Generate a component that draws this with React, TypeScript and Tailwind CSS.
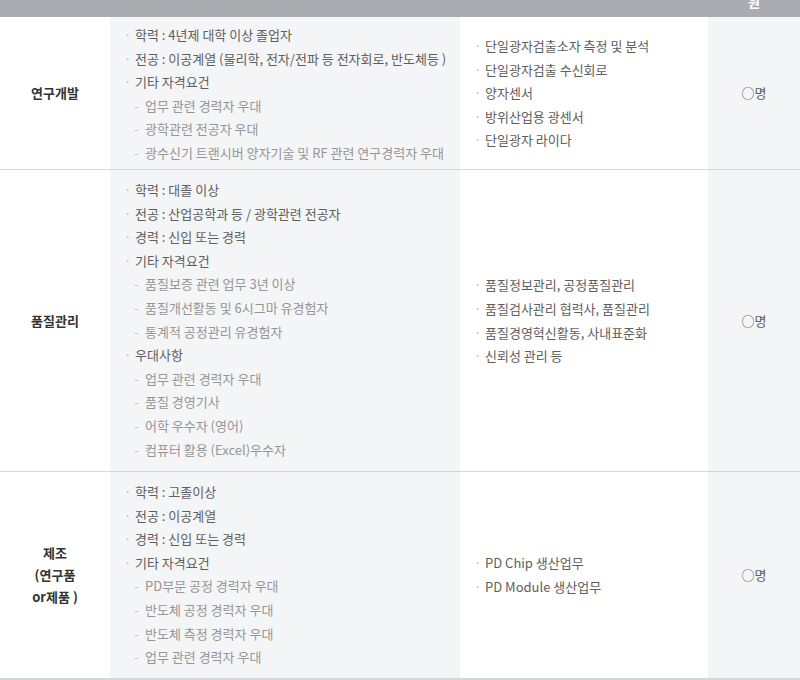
type Item = { text: string; sub?: boolean };

interface Row {
  title: string[];
  reqs: Item[];
  duties: string[];
  count: string;
  height: string;
  pad: string;
}

const rows: Row[] = [
  {
    title: ["연구개발"],
    reqs: [
      { text: "학력 : 4년제 대학 이상 졸업자" },
      { text: "전공 : 이공계열 (물리학, 전자/전파 등 전자회로, 반도체등 )" },
      { text: "기타 자격요건" },
      { text: "업무 관련 경력자 우대", sub: true },
      { text: "광학관련 전공자 우대", sub: true },
      { text: "광수신기 트랜시버 양자기술 및 RF 관련 연구경력자 우대", sub: true },
    ],
    duties: [
      "단일광자검출소자 측정 및 분석",
      "단일광자검출 수신회로",
      "양자센서",
      "방위산업용 광센서",
      "단일광자 라이다",
    ],
    count: "○명",
    height: "h-[152px]",
    pad: "pt-[6px]",
  },
  {
    title: ["품질관리"],
    reqs: [
      { text: "학력 : 대졸 이상" },
      { text: "전공 : 산업공학과 등 / 광학관련 전공자" },
      { text: "경력 : 신입 또는 경력" },
      { text: "기타 자격요건" },
      { text: "품질보증 관련 업무 3년 이상", sub: true },
      { text: "품질개선활동 및 6시그마 유경험자", sub: true },
      { text: "통계적 공정관리 유경험자", sub: true },
      { text: "우대사항" },
      { text: "업무 관련 경력자 우대", sub: true },
      { text: "품질 경영기사", sub: true },
      { text: "어학 우수자 (영어)", sub: true },
      { text: "컴퓨터 활용 (Excel)우수자", sub: true },
    ],
    duties: [
      "품질정보관리, 공정품질관리",
      "품질검사관리 협력사, 품질관리",
      "품질경영혁신활동, 사내표준화",
      "신뢰성 관리 등",
    ],
    count: "○명",
    height: "h-[301px]",
    pad: "pt-[8px]",
  },
  {
    title: ["제조", "(연구품", "or제품 )"],
    reqs: [
      { text: "학력 : 고졸이상" },
      { text: "전공 : 이공계열" },
      { text: "경력 : 신입 또는 경력" },
      { text: "기타 자격요건" },
      { text: "PD부문 공정 경력자 우대", sub: true },
      { text: "반도체 공정 경력자 우대", sub: true },
      { text: "반도체 측정 경력자 우대", sub: true },
      { text: "업무 관련 경력자 우대", sub: true },
    ],
    duties: ["PD Chip 생산업무", "PD Module 생산업무"],
    count: "○명",
    height: "h-[206px]",
    pad: "pt-[8px]",
  },
];

const cols = "grid grid-cols-[110px_350px_248px_1fr]";

export default function App() {
  return (
    <div
      className="w-[800px] h-[680px] overflow-hidden bg-white text-[13px]"
      style={{ fontFamily: '"Noto Sans CJK KR", "Noto Sans", sans-serif' }}
    >
      {/* header, cut off at the top */}
      <div className={`${cols} h-[17px] overflow-hidden bg-[#a9adb2]`}>
        <div />
        <div />
        <div />
        <div className="flex justify-center -mt-[8px] text-[13px] font-bold leading-[20px] text-white">원</div>
      </div>

      {rows.map((row, i) => (
        <div
          key={i}
          className={`${cols} ${row.height} ${
            i === rows.length - 1 ? "border-b-2" : "border-b"
          } border-[#d6d7d9] box-content`}
        >
          <div className="flex flex-col items-center justify-center text-[13px] font-bold leading-[22px] text-[#333]">
            {row.title.map((t) => (
              <span key={t}>{t}</span>
            ))}
          </div>

          <div className={`bg-[#f4f5f7] pl-[14px] ${row.pad}`}>
            {row.reqs.map((it, j) => (
              <div
                key={j}
                className={`flex whitespace-nowrap leading-[23.6px] ${
                  it.sub ? "pl-[10px] text-[#959595]" : "text-[#5e5e5e]"
                }`}
              >
                <span className={`w-[11px] ${it.sub ? "text-[#c0c0c0]" : "text-[#b8b8b8]"}`}>
                  {it.sub ? "-" : "·"}
                </span>
                <span>{it.text}</span>
              </div>
            ))}
          </div>

          <div className="flex flex-col justify-center pl-[14px]">
            {row.duties.map((d) => (
              <div key={d} className="flex whitespace-nowrap leading-[23.6px] text-[#5e5e5e]">
                <span className="w-[11px] text-[#b8b8b8]">·</span>
                <span>{d}</span>
              </div>
            ))}
          </div>

          <div className="flex items-center justify-center bg-[#f4f5f7] text-[13px] text-[#5e5e5e]">
            {row.count}
          </div>
        </div>
      ))}
    </div>
  );
}
